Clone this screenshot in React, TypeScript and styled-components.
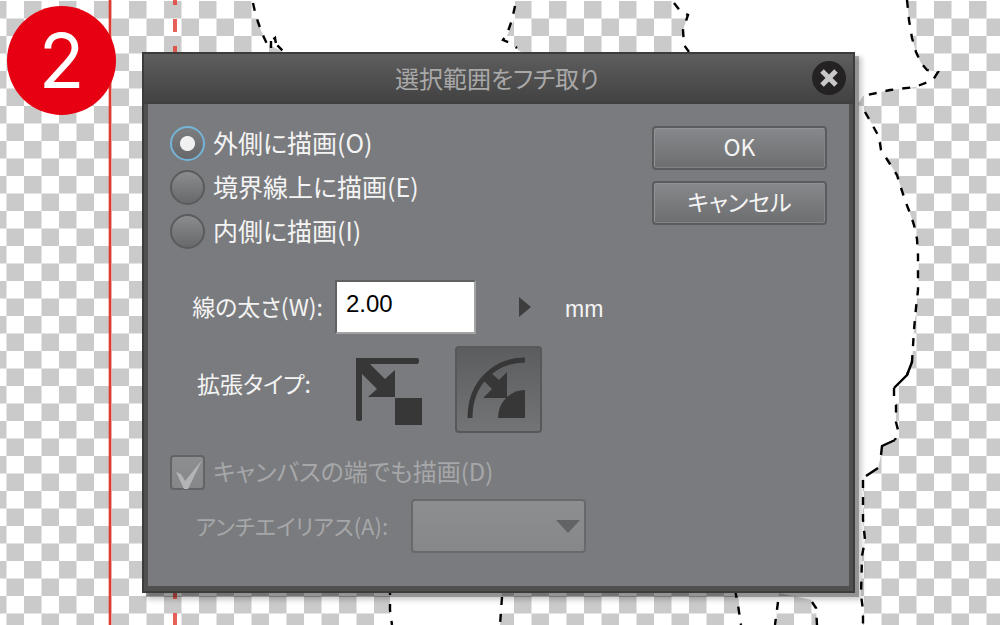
import React, { useState } from "react";
import styled, { createGlobalStyle } from "styled-components";

const GlobalStyle = createGlobalStyle`
  * { box-sizing: border-box; }
  body {
    margin: 0;
    font-family: "Noto Sans CJK JP", "Liberation Sans", sans-serif;
    font-feature-settings: "palt";
    background: #fff;
  }
  button, input, select { font: inherit; }
`;

const Page = styled.div`
  position: relative;
  min-height: 100vh;
  padding: 52px 145px 32px 142px;
  overflow: hidden;
`;

const Canvas = styled.svg`
  position: absolute;
  inset: 0;
  width: 100%;
  height: 100%;
`;

const StepBadge = styled.div`
  position: absolute;
  top: 6px;
  left: 7px;
  width: 109px;
  height: 109px;
  border-radius: 50%;
  background: #e60012;
  color: #fff;
  font-family: Inter, sans-serif;
  font-size: 75px;
  line-height: 109px;
  text-align: center;
`;

const Dialog = styled.section`
  position: relative;
  border: 2px solid #3c3c3c;
  background: #505051;
  box-shadow: 4px 4px 0 rgba(0, 0, 0, 0.28), 6px 6px 5px 1px rgba(0, 0, 0, 0.2);
`;

const TitleBar = styled.header`
  display: flex;
  align-items: center;
  height: 50px;
  padding: 0 7px 0 38px;
  background: linear-gradient(#5e5e5f, #424243);
  border-bottom: 2px solid #3f3f40;
`;

const Title = styled.h1`
  flex: 1;
  margin: 0;
  font-size: 24px;
  line-height: 36px;
  font-weight: 400;
  text-align: center;
  color: #a9a9a9;
`;

const CloseButton = styled.button`
  display: grid;
  place-items: center;
  width: 34px;
  height: 34px;
  padding: 0;
  border: 0;
  border-radius: 50%;
  background: #242223;
`;

const Body = styled.div`
  display: flex;
  align-items: flex-start;
  justify-content: space-between;
  margin: 0 4px 5px;
  padding: 22px 22px 33px;
  background: #7a7b7e;
`;

const Form = styled.form`
  display: flex;
  flex-direction: column;
  gap: 22px;
`;

const Group = styled.div<{ $gap: number }>`
  display: flex;
  flex-direction: column;
  gap: ${(p) => p.$gap}px;
`;

const RadioGroup = styled.fieldset`
  display: flex;
  flex-direction: column;
  gap: 9px;
  margin: 0 0 9px;
  padding: 0;
  border: 0;
`;

const Choice = styled.label<{ $dim?: boolean }>`
  display: flex;
  align-items: center;
  gap: 8px;
  height: 35px;
  font-size: ${(p) => (p.$dim ? 24 : 25)}px;
  line-height: 32px;
  white-space: nowrap;
  color: ${(p) => (p.$dim ? "#a6a7a9" : "#f4f4f4")};
`;

const ChoiceText = styled.span`
  padding-bottom: 3px;
`;

const Radio = styled.input`
  appearance: none;
  width: 35px;
  height: 35px;
  margin: 0;
  border: 2px solid #5a5b5d;
  border-radius: 50%;
  background: linear-gradient(#8b8c8e, #68696b);
  &:checked {
    border-color: #74b4d8;
    background: radial-gradient(circle, #f1f1f1 7px, transparent 8px),
      linear-gradient(#7c7d7f, #67686a);
  }
`;

const CheckWrap = styled.span`
  display: grid;
  width: 35px;
  height: 35px;
  > * { grid-area: 1 / 1; }
`;

const CheckBox = styled.input`
  appearance: none;
  width: 35px;
  height: 35px;
  margin: 0;
  border: 2px solid #636466;
  border-radius: 4px;
  background: linear-gradient(#8d8e8f, #868788);
`;

const FieldRow = styled.div`
  display: flex;
  align-items: center;
`;

const FieldLabel = styled.label<{ $width: number; $space: number; $lift?: number; $dim?: boolean }>`
  width: ${(p) => p.$width}px;
  padding: 0 ${(p) => p.$space}px ${(p) => p.$lift ?? 3}px 0;
  font-size: ${(p) => (p.$dim ? 22 : 23)}px;
  line-height: 36px;
  white-space: nowrap;
  text-align: right;
  color: ${(p) => (p.$dim ? "#a6a7a9" : "#f4f4f4")};
`;

const WidthInput = styled.input`
  width: 141px;
  height: 54px;
  padding: 0 9px 6px;
  border: 2px solid;
  border-color: #606163 #a3a3a4 #a3a3a4 #606163;
  border-radius: 0;
  background: #fff;
  color: #000;
  font-family: "Liberation Sans Narrow", "Liberation Sans", sans-serif;
  font-size: 24px;
`;

const StepButton = styled.button`
  display: grid;
  place-items: center;
  width: 26px;
  height: 36px;
  margin: 0 27px 0 36px;
  padding: 0;
  border: 0;
  background: transparent;
`;

const Unit = styled.span`
  padding-top: 3px;
  color: #f4f4f4;
  font-family: "Liberation Sans", sans-serif;
  font-size: 23px;
  line-height: 36px;
`;

const IconRow = styled.div`
  display: flex;
  gap: 22px;
`;

const IconButton = styled.button<{ $on?: boolean }>`
  display: block;
  width: 87px;
  height: 87px;
  padding: 0;
  border: 2px solid ${(p) => (p.$on ? "#57585a" : "transparent")};
  border-radius: 4px;
  background: ${(p) => (p.$on ? "linear-gradient(#5c5d5f, #737476)" : "transparent")};
  svg { display: block; }
`;

const SelectWrap = styled.span`
  display: grid;
  align-items: center;
  width: 175px;
  > * { grid-area: 1 / 1; }
  svg { justify-self: end; margin-right: 6px; pointer-events: none; }
`;

const Select = styled.select`
  appearance: none;
  width: 100%;
  height: 54px;
  padding: 0 40px 0 12px;
  border: 2px solid #68696b;
  border-radius: 4px;
  background: linear-gradient(#8d8e8f, #868788);
  opacity: 1;
`;

const Actions = styled.div`
  display: flex;
  flex-direction: column;
  gap: 11px;
  width: 175px;
`;

const ActionButton = styled.button`
  height: 44px;
  padding: 0 0 4px;
  border: 2px solid #5b5c5e;
  border-radius: 4px;
  background: linear-gradient(#87888b, #6d6e70);
  box-shadow: inset 1px 1px 0 #929396, inset -1px -1px 0 #838487;
  color: #f4f4f4;
  font-size: 23px;
  line-height: 36px;
`;

function Artwork() {
  return (
    <Canvas aria-hidden="true">
      <defs>
        <pattern id="checker" x="-11" y="1" width="35" height="35" patternUnits="userSpaceOnUse">
          <rect width="35" height="35" fill="#fff" />
          <rect width="17.5" height="17.5" fill="#cacaca" />
          <rect x="17.5" y="17.5" width="17.5" height="17.5" fill="#cacaca" />
        </pattern>
      </defs>
      <rect width="100%" height="100%" fill="url(#checker)" />
      <rect width="100%" height="1" fill="#fff" />
      <g fill="#fff">
        <path d="M251 0L255 12L258 22L262 33L268 44L283 52V70H530L521 52L505 40L515 18L515 0Z" />
        <path d="M672 0L681 12L688 15L683 30L684 45L689 52V593H738L741 625H775L779 593L812 600L816 608L817 625H863V610L861 595L862 556L865 540L863 520V480L866 476L878 468L881 455L882 446L895 440L898 430L896 422L896 405L894 388L907 375L912 362L914 330L916 308L918 290L919 255L917 239L914 225L910 213L906 203L901 188L897 175L890 164L881 150L879 137L873 126L865 112L858 104L863 96L890 90L915 87L933 80L938 72L927 70L921 63L916 52L912 38L909 20L907 0Z" />
        <path d="M390 590V610L392 625H500L502 590Z" />
      </g>
      <g fill="none" stroke="#000" strokeWidth="2.4" strokeDasharray="8 9">
        <path d="M253 3L255 12L258 22L262 33L268 46" />
        <path d="M271 48V41L275 38L276 44L284 52" strokeDasharray="7 3" />
        <path d="M515 6L512 20L507 34L503 40L510 43L517 48" />
        <path d="M674 3L681 12L688 15L683 30L684 45L689 52" />
        <path d="M907 0L909 20L912 38L916 52L921 63L927 70L938 72L933 80L915 87L890 90L863 96" />
        <path d="M865 112L873 126L879 137L881 150L890 164L897 175L901 188L906 203L910 213L914 225L917 239L918 255V290L916 308L914 330L912 362L907 375" />
        <path d="M912 362L907 375L894 388" strokeDasharray="none" />
        <path d="M894 388L894 400L896 405L896 422L898 430L895 440" />
        <path d="M895 440L882 446L881 455M878 468L866 476" strokeDasharray="none" />
        <path d="M863 480V520L865 540L862 556L861 595L863 610V625" />
        <path d="M390 587V610L392 625M502 597L500 625M735 590L738 605L741 625M778 602L775 625M812 602L816 608L817 625" />
      </g>
      <g fill="none" stroke="#e2392f">
        <path d="M110 0V625" strokeOpacity="0.3" strokeWidth="4" />
        <path d="M110 0V625" strokeWidth="2" />
        <path d="M175 -8V625" strokeOpacity="0.8" strokeWidth="4" strokeDasharray="13 14" />
      </g>
    </Canvas>
  );
}

export default function App() {
  const [side, setSide] = useState("O");
  const [width, setWidth] = useState("2.00");
  const [corner, setCorner] = useState("round");
  const sides = [
    ["O", "外側に描画(O)"],
    ["E", "境界線上に描画(E)"],
    ["I", "内側に描画(I)"],
  ];

  return (
    <>
      <GlobalStyle />
      <Page>
        <Artwork />
        <Dialog role="dialog" aria-labelledby="title">
          <TitleBar>
            <Title id="title">選択範囲をフチ取り</Title>
            <CloseButton type="button" aria-label="閉じる">
              <svg width="20" height="20" viewBox="0 0 20 20">
                <path d="M3 3L17 17M17 3L3 17" stroke="#c9c9c9" strokeWidth="5" />
              </svg>
            </CloseButton>
          </TitleBar>
          <Body>
            <Form id="border-form" onSubmit={(e) => e.preventDefault()}>
              <RadioGroup>
                {sides.map(([key, text]) => (
                  <Choice key={key}>
                    <Radio type="radio" name="side" checked={side === key} onChange={() => setSide(key)} />
                    <ChoiceText>{text}</ChoiceText>
                  </Choice>
                ))}
              </RadioGroup>
              <Group $gap={12}>
                <FieldRow>
                  <FieldLabel htmlFor="line-width" $width={165} $space={12}>線の太さ(W):</FieldLabel>
                  <WidthInput id="line-width" value={width} onChange={(e) => setWidth(e.target.value)} />
                  <StepButton type="button" aria-label="スライダー">
                    <svg width="12" height="20" viewBox="0 0 12 20">
                      <path d="M0 0L12 10L0 20Z" fill="#3d3d3e" />
                    </svg>
                  </StepButton>
                  <Unit>mm</Unit>
                </FieldRow>
                <FieldRow>
                  <FieldLabel as="span" $width={176} $space={35} $lift={14}>拡張タイプ:</FieldLabel>
                  <IconRow>
                    <IconButton type="button" aria-label="角" $on={corner === "square"} onClick={() => setCorner("square")}>
                      <svg width="83" height="83" viewBox="0 0 83 83">
                        <g fill="#373738">
                          <path d="M8 10H69Q71 10 71 13T69 16H22L37 31L47 22V49H20L29 41L14 26V71Q14 73 11 73T8 71Z" />
                          <rect x="47" y="50" width="27" height="27" />
                        </g>
                      </svg>
                    </IconButton>
                    <IconButton type="button" aria-label="丸" $on={corner === "round"} onClick={() => setCorner("round")}>
                      <svg width="83" height="83" viewBox="0 0 83 83">
                        <path d="M13 70Q13 44 29 28T68 12" fill="none" stroke="#373738" strokeWidth="5" />
                        <g fill="#373738">
                          <path d="M33 24L42 32L50 24V50H26L35 41L26 32Z" />
                          <path d="M68 42V70H41Q41 58 49 50T68 42Z" />
                        </g>
                      </svg>
                    </IconButton>
                  </IconRow>
                </FieldRow>
              </Group>
              <Group $gap={9}>
                <Choice $dim>
                  <CheckWrap>
                    <CheckBox type="checkbox" checked disabled readOnly />
                    <svg width="35" height="35" viewBox="0 0 35 35">
                      <path d="M6 17L11 19L15 26L32 5L18 34H14Z" fill="#b3b4b5" />
                    </svg>
                  </CheckWrap>
                  <ChoiceText>キャンバスの端でも描画(D)</ChoiceText>
                </Choice>
                <FieldRow>
                  <FieldLabel htmlFor="antialias" $width={241} $space={23} $dim>アンチエイリアス(A):</FieldLabel>
                  <SelectWrap>
                    <Select id="antialias" disabled />
                    <svg width="24" height="13" viewBox="0 0 24 13">
                      <path d="M0 0H24L12 13Z" fill="#626365" />
                    </svg>
                  </SelectWrap>
                </FieldRow>
              </Group>
            </Form>
            <Actions>
              <ActionButton type="submit" form="border-form">OK</ActionButton>
              <ActionButton type="button">キャンセル</ActionButton>
            </Actions>
          </Body>
        </Dialog>
        <StepBadge>2</StepBadge>
      </Page>
    </>
  );
}
